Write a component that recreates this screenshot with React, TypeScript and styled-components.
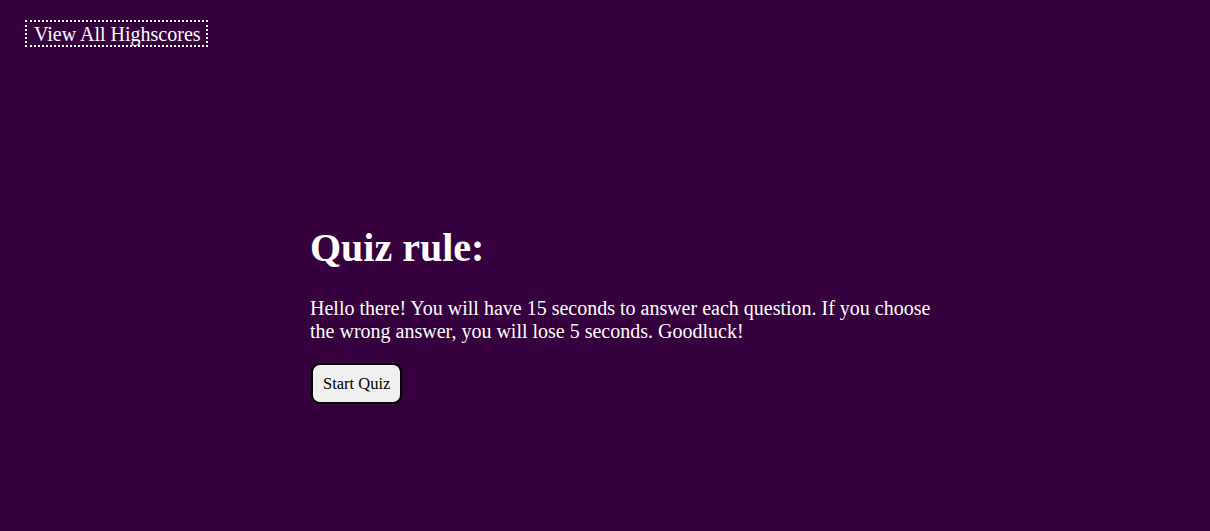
import React from "react";
import styled, { createGlobalStyle } from "styled-components";

const Global = createGlobalStyle`
  html, body { margin: 0; padding: 0; }
  body {
    background: #36003f;
    color: #ffffff;
    font-family: "Liberation Serif", "Times New Roman", serif;
    min-height: 531px;
  }
`;

const Header = styled.header`
  display: flex;
  padding: 20px 25px 0;
`;

const ScoresLink = styled.a`
  display: inline-block;
  color: #ffffff;
  font-size: 20px;
  line-height: 21px;
  padding: 2px 5px 0 7px;
  border: 2px dotted #ffffff;
  text-decoration: none;
  cursor: pointer;
`;

const Main = styled.main`
  display: flex;
  flex-direction: column;
  align-items: flex-start;
  padding: 178px 0 0 310px;
`;

const Title = styled.h1`
  margin: 0;
  font-size: 40px;
  line-height: 46px;
  font-weight: bold;
`;

const Rules = styled.p`
  margin: 26px 0 0;
  width: 640px;
  font-size: 20px;
  line-height: 23px;
`;

const StartButton = styled.button`
  margin: 20px 0 0 1px;
  font-family: "Liberation Serif", "Times New Roman", serif;
  font-size: 16.5px;
  color: #000000;
  background: #f0f0f0;
  border: 2px solid #000000;
  border-radius: 9px;
  padding: 11px 10px 10px;
  line-height: 16px;
  cursor: pointer;
`;

export default function App() {
  return (
    <>
      <Global />
      <Header>
        <ScoresLink>View All Highscores</ScoresLink>
      </Header>
      <Main>
        <Title>Quiz rule:</Title>
        <Rules>
          Hello there! You will have 15 seconds to answer each question. If you
          choose the wrong answer, you will lose 5 seconds. Goodluck!
        </Rules>
        <StartButton>Start Quiz</StartButton>
      </Main>
    </>
  );
}
